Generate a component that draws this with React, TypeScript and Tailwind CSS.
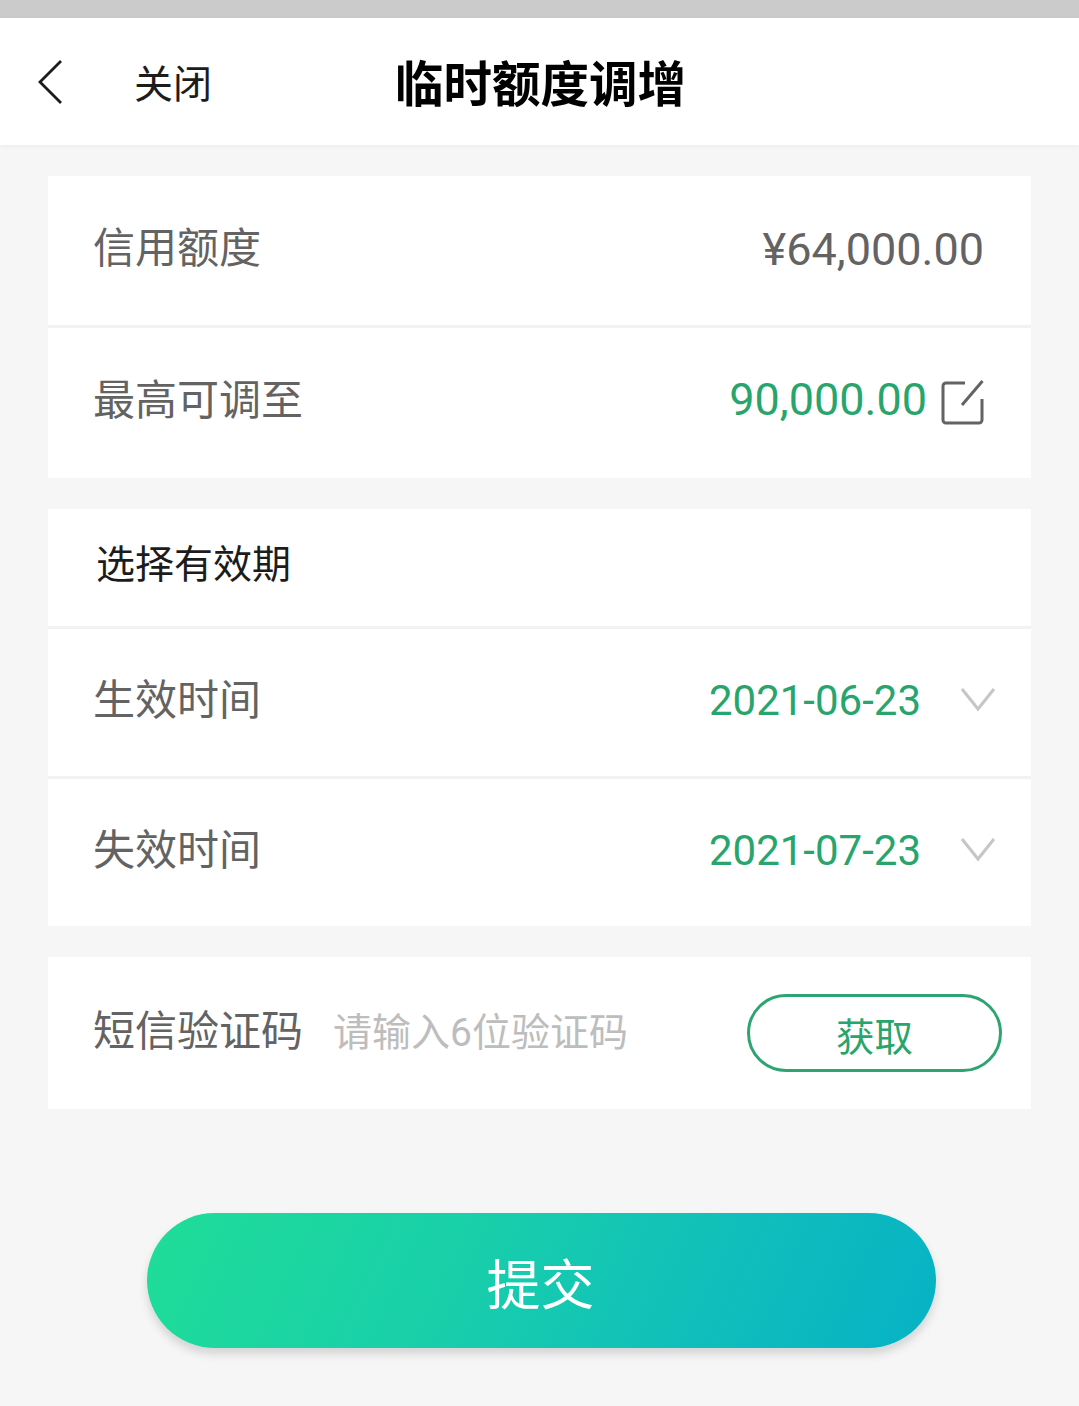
import { useState } from 'react';

const LABEL = 'text-[42px] leading-[60px] text-[#636363]';

export default function App() {
  const [code, setCode] = useState('');

  return (
    <div className="h-[1406px] w-full overflow-hidden bg-[#f6f6f6] font-['Roboto','Noto_Sans_CJK_SC',sans-serif]">
      <div className="h-[18px] bg-[#cbcbcb]" />
      <header className="grid h-[127px] grid-cols-[395px_1fr_395px] items-center bg-white shadow-[0_1px_5px_rgba(0,0,0,0.05)]">
        <div className="flex items-center pl-[37px]">
          <BackIcon />
          <button className="ml-[71px] pt-1.5 text-[39px] leading-[60px] text-[#1c1c1c]">关闭</button>
        </div>
        <h1 className="whitespace-nowrap pt-2 text-center text-[48.5px] font-bold leading-[60px] text-black">临时额度调增</h1>
      </header>

      <main className="px-12 pt-[31px]">
        <section className="bg-white">
          <div className="flex h-[149px] items-center justify-between pb-1 pl-[45px] pr-[47px]">
            <span className={LABEL}>信用额度</span>
            <span className="pt-0.5 text-[45px] leading-[60px] text-[#636363]">¥64,000.00</span>
          </div>
          <Divider />
          <div className="flex h-[150px] items-center pb-1 pl-[45px] pr-[46px]">
            <span className={LABEL}>最高可调至</span>
            <span className="ml-auto pb-0.5 text-[45px] leading-[60px] text-[#27a56c]">90,000.00</span>
            <EditIcon />
          </div>
        </section>

        <section className="mt-[31px] bg-white">
          <div className="flex h-[117px] items-center pb-1.5 pl-12 text-[39px] leading-[60px] text-[#1c1c1c]">选择有效期</div>
          <Divider />
          <DateRow label="生效时间" value="2021-06-23" />
          <Divider />
          <DateRow label="失效时间" value="2021-07-23" />
        </section>

        <section className="mt-[31px] flex h-[152px] items-center bg-white pl-[45px] pr-[29px]">
          <span className={`${LABEL} -mt-0.5 shrink-0`}>短信验证码</span>
          <input
            value={code}
            onChange={(e) => setCode(e.target.value)}
            placeholder="请输入6位验证码"
            className="ml-[30px] h-[60px] w-[340px] text-[39px] outline-none placeholder:text-[#bdbdbd]"
          />
          <button className="ml-auto h-[78px] w-[255px] rounded-full border-3 border-[#2fa473] pt-2.5 text-[38.5px] leading-[60px] text-[#27a56c]">获取</button>
        </section>
      </main>

      <button className="ml-[147px] mt-[104px] block h-[135px] w-[789px] rounded-full bg-[linear-gradient(115deg,#20dd98_0%,#18cfaa_40%,#10bfbb_70%,#06b2c5_100%)] pr-0.5 pt-3 text-[54px] leading-[80px] text-white shadow-[0_6px_10px_rgba(0,0,0,0.14)]">
        提交
      </button>
    </div>
  );
}

function Divider() {
  return <div className="h-[3px] bg-[#f2f2f2]" />;
}

function DateRow({ label, value }: { label: string; value: string }) {
  return (
    <div className="flex h-[147px] items-center pb-[3px] pl-[45px] pr-[35px]">
      <span className={LABEL}>{label}</span>
      <span className="ml-auto text-[42px] leading-[60px] text-[#27a56c]">{value}</span>
      <svg className="-mt-0.5 ml-[39px]" width="36" height="26" viewBox="0 0 36 26" fill="none" stroke="#c6c6c6" strokeWidth="3">
        <path d="M2 2l16 20L34 2" />
      </svg>
    </div>
  );
}

function BackIcon() {
  return (
    <svg width="26" height="46" viewBox="0 0 26 46" fill="none" stroke="#1c1c1c" strokeWidth="2.8">
      <path d="M24 2L3 23l21 21" />
    </svg>
  );
}

function EditIcon() {
  return (
    <svg className="ml-3.5 mt-0.5" width="44" height="46" viewBox="0 0 44 46" fill="none" stroke="#636363" strokeWidth="3">
      <path d="M24 4H5a3 3 0 0 0-3 3v34a3 3 0 0 0 3 3h33a3 3 0 0 0 3-3V20" />
      <path d="M41.5 2L21 26" />
    </svg>
  );
}
